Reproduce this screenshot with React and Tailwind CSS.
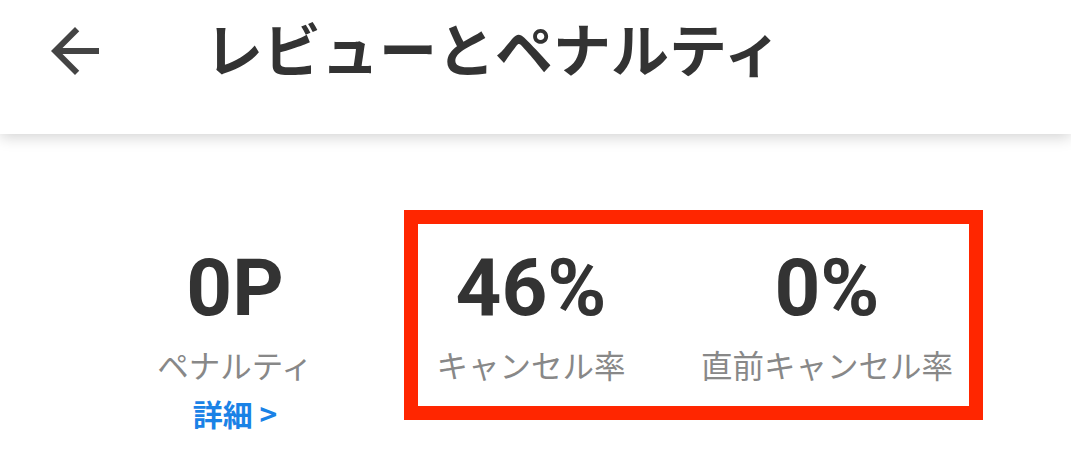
import React from "react";

const jp = { fontFamily: '"Noto Sans CJK JP", "Noto Sans", sans-serif' };
const num = { fontFamily: 'Roboto, "Liberation Sans", sans-serif' };

function Stat({ value, label, link }) {
  return (
    <div className="flex flex-col items-center">
      <div style={num} className="text-[80px] leading-[96px] font-bold text-[#333333]">
        {value}
      </div>
      <div style={jp} className="mt-[8px] text-[31.5px] leading-[40px] text-[#888888]">
        {label}
      </div>
      {link && (
        <div style={jp} className="mt-[11px] text-[30px] leading-[36px] font-bold text-[#1a82e6]">
          詳細 &gt;
        </div>
      )}
    </div>
  );
}

export default function App() {
  return (
    <div className="relative w-[1071px] h-[467px] bg-white overflow-hidden">
      <header className="relative z-10 h-[134px] bg-white flex items-center shadow-[0_3px_14px_rgba(0,0,0,0.18)]">
        <svg viewBox="0 0 24 24" className="ml-[39px] w-[72px] h-[72px] -mt-[32px]" fill="#444444">
          <path d="M20 11H7.83l5.59-5.59L12 4l-8 8 8 8 1.41-1.41L7.83 13H20v-2z" />
        </svg>
        <h1 style={jp} className="ml-[94px] -mt-[40px] text-[58px] leading-[70px] font-bold text-[#333333]">
          レビューとペナルティ
        </h1>
      </header>
      <div className="grid grid-cols-[296px_296px_296px] pl-[87px] pt-[106px]">
        <Stat value="0P" label="ペナルティ" link />
        <Stat value="46%" label="キャンセル率" />
        <Stat value="0%" label="直前キャンセル率" />
      </div>
      <div className="absolute left-[404px] top-[210px] w-[579px] h-[210px] border-[14px] border-[#ff2600]" />
    </div>
  );
}
